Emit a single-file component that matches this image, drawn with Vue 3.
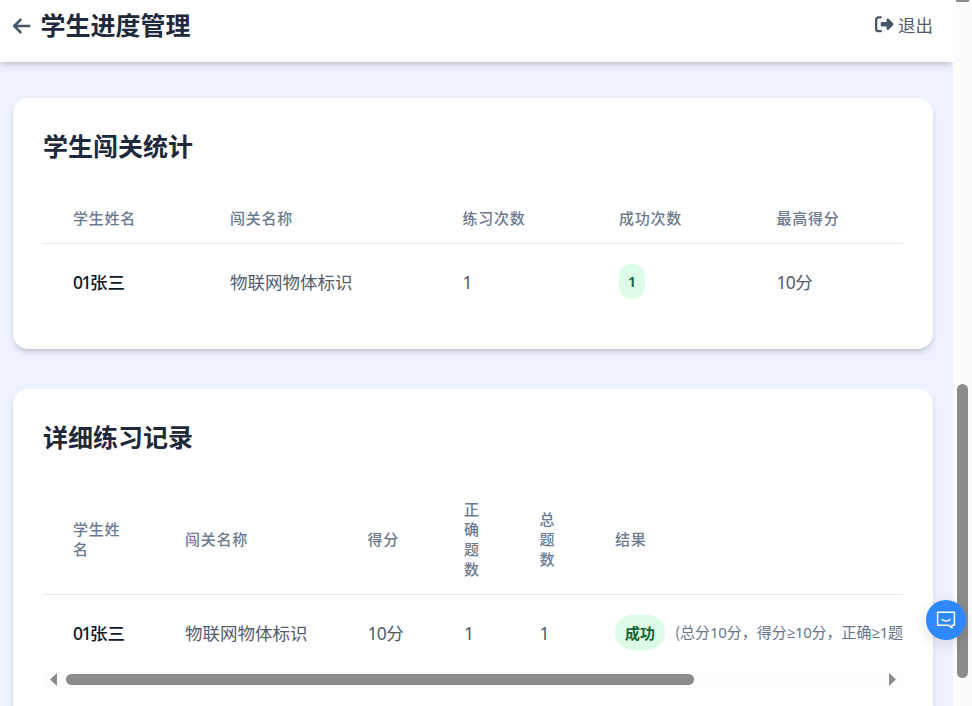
<template>
  <div class="screen">
    <div class="page">
      <header class="header">
        <div class="header-left">
          <svg class="icon-back" viewBox="0 0 448 512">
            <path d="M9.4 233.4c-12.5 12.5-12.5 32.8 0 45.3l160 160c12.5 12.5 32.8 12.5 45.3 0s12.5-32.8 0-45.3L109.2 288 416 288c17.7 0 32-14.3 32-32s-14.3-32-32-32l-306.7 0L214.6 118.6c12.5-12.5 12.5-32.8 0-45.3s-32.8-12.5-45.3 0l-160 160z" />
          </svg>
          <h1 class="title">学生进度管理</h1>
        </div>
        <div class="logout">
          <svg class="icon-logout" viewBox="0 0 512 512">
            <path d="M377.9 105.9L500.7 228.7c7.2 7.2 11.3 17.1 11.3 27.3s-4.1 20.1-11.3 27.3L377.9 406.1c-6.4 6.4-15 9.9-24 9.9c-18.7 0-33.9-15.2-33.9-33.9l0-62.1-128 0c-17.7 0-32-14.3-32-32l0-64c0-17.7 14.3-32 32-32l128 0 0-62.1c0-18.7 15.2-33.9 33.9-33.9c9 0 17.6 3.6 24 9.9zM160 96L96 96c-17.7 0-32 14.3-32 32l0 256c0 17.7 14.3 32 32 32l64 0c17.7 0 32 14.3 32 32s-14.3 32-32 32l-64 0c-53 0-96-43-96-96L0 128C0 75 43 32 96 32l64 0c17.7 0 32 14.3 32 32s-14.3 32-32 32z" />
          </svg>
          <span>退出</span>
        </div>
      </header>

      <main class="content">
        <section class="card">
          <h2 class="card-title">学生闯关统计</h2>
          <div class="row head stats">
            <div v-for="name in statsColumns" :key="name" class="cell">{{ name }}</div>
          </div>
          <div v-for="item in stats" :key="item.no" class="row body stats">
            <div class="cell name"><span class="num">{{ item.no }}</span>{{ item.name }}</div>
            <div class="cell">{{ item.level }}</div>
            <div class="cell"><span class="num">{{ item.times }}</span></div>
            <div class="cell"><span class="badge count">{{ item.success }}</span></div>
            <div class="cell"><span class="num">{{ item.best }}</span>分</div>
          </div>
        </section>

        <section class="card">
          <h2 class="card-title">详细练习记录</h2>
          <div class="table-wrap">
            <div class="row head records">
              <div v-for="name in recordColumns" :key="name" class="cell">{{ name }}</div>
            </div>
            <div v-for="item in records" :key="item.no" class="row body records">
              <div class="cell name"><span class="num">{{ item.no }}</span>{{ item.name }}</div>
              <div class="cell">{{ item.level }}</div>
              <div class="cell"><span class="num">{{ item.score }}</span>分</div>
              <div class="cell"><span class="num">{{ item.correct }}</span></div>
              <div class="cell"><span class="num">{{ item.total }}</span></div>
              <div class="cell result">
                <span class="badge">{{ item.result }}</span>
                <span class="note">(总分<span class="num">{{ item.full }}</span>分，得分<span class="num">≥{{ item.score }}</span>分，正确<span class="num">≥{{ item.correct }}</span>题</span>
              </div>
            </div>
          </div>
          <div class="hbar">
            <svg class="harrow" viewBox="0 0 7 13"><path d="M7 0v13L0 6.5z" /></svg>
            <div class="htrack"><div class="hthumb"></div></div>
            <svg class="harrow" viewBox="0 0 7 13"><path d="M0 0v13l7-6.5z" /></svg>
          </div>
        </section>
      </main>
    </div>

    <div class="vbar">
      <div class="varrow"></div>
      <div class="vthumb"></div>
    </div>

    <div class="chat">
      <svg class="icon-chat" viewBox="0 0 20 20">
        <path d="M1.6 2.2h16.8v13h-2.4v2.6l-3.6-2.6H1.6z" />
        <path d="M6 9.6q4 2.6 8 0" />
      </svg>
    </div>
  </div>
</template>

<script setup>
const statsColumns = ['学生姓名', '闯关名称', '练习次数', '成功次数', '最高得分'];
const recordColumns = ['学生姓名', '闯关名称', '得分', '正确题数', '总题数', '结果'];

const stats = [
  { no: '01', name: '张三', level: '物联网物体标识', times: 1, success: 1, best: 10 },
];

const records = [
  {
    no: '01',
    name: '张三',
    level: '物联网物体标识',
    score: 10,
    full: 10,
    correct: 1,
    total: 1,
    result: '成功',
  },
];
</script>

<style>
body {
  margin: 0;
  overflow: hidden;
}
</style>

<style scoped>
.screen {
  position: relative;
  display: flex;
  height: 706px;
  overflow: hidden;
  font-family: "Noto Sans CJK SC", sans-serif;
  font-size: 17.5px;
  line-height: 25px;
  color: #525c6c;
}

.page {
  width: 953px;
  background: #eef2ff;
}

/* header */
.header {
  display: flex;
  justify-content: space-between;
  box-sizing: border-box;
  height: 62px;
  padding: 7px 20px 0 13px;
  background: #fff;
  box-shadow: 0 5px 7px -1px rgba(0, 0, 0, 0.1), 0 2px 5px -2px rgba(0, 0, 0, 0.2);
}

.header-left {
  display: flex;
  align-items: center;
  gap: 10px;
  height: 35px;
}

.icon-back {
  width: 17.5px;
  height: 20px;
  margin-top: 2px;
  fill: #475569;
}

.title,
.card-title {
  margin: 0;
  font-size: 25px;
  line-height: 35px;
  font-weight: 700;
  color: #1e293b;
}

.logout {
  display: flex;
  align-items: center;
  gap: 4.5px;
  height: 34px;
  color: #4f5c70;
}

.icon-logout {
  width: 18.5px;
  height: 18.5px;
  fill: #475569;
}

/* cards */
.content {
  display: flex;
  flex-direction: column;
  gap: 40px;
  padding: 36px 20px 0 13px;
}

.card {
  padding: 30px;
  border-radius: 15px;
  background: #fff;
  box-shadow: 0 5px 7px -1px rgba(0, 0, 0, 0.1), 0 2px 5px -2px rgba(0, 0, 0, 0.2);
}

.card-title {
  margin-bottom: 30px;
}

/* tables */
.table-wrap {
  overflow: hidden;
}

.row {
  display: grid;
  align-items: center;
}

.stats {
  grid-template-columns: 157px 232.5px 156.5px 157.5px 156.5px;
}

.records {
  grid-template-columns: 112px 182.5px 96.5px 75.5px 75.5px 610px;
  width: 1152px;
}

.head {
  border-bottom: 1px solid #e2e8f0;
  font-size: 15px;
  line-height: 20px;
  font-weight: 500;
  letter-spacing: 0.75px;
  color: #6b7a90;
}

.head .cell {
  padding: 15px 30px;
}

.body .cell {
  padding: 0 30px;
  white-space: nowrap;
}

.body {
  height: 75px;
}

.name {
  font-weight: 500;
  color: #0f172a;
}

.num {
  font-family: "Noto Sans", "Open Sans", sans-serif;
  letter-spacing: -0.7px;
}

.name .num {
  letter-spacing: -1.5px;
}

.badge {
  display: inline-block;
  padding: 0 10px;
  border-radius: 18px;
  background: #dcfce7;
  color: #166534;
  font-size: 15px;
  line-height: 35px;
  font-weight: 700;
}

.count {
  padding: 0 8.8px;
  font-family: "Noto Sans", "Open Sans", sans-serif;
  font-weight: 600;
}

.result {
  display: flex;
  align-items: center;
  gap: 10px;
}

.note {
  margin-top: -2px;
  font-size: 15px;
  color: #64748b;
}

.note .num {
  letter-spacing: -0.3px;
}

/* scrollbars */
.hbar {
  display: flex;
  align-items: center;
  justify-content: space-between;
  height: 19px;
  padding: 0 7px;
  background: #fdfdfd;
}

.harrow {
  width: 7px;
  height: 13px;
  fill: #8b8b8b;
}

.htrack {
  width: 814px;
}

.hthumb {
  width: 628px;
  height: 11px;
  border-radius: 6px;
  background: #8b8b8b;
}

.vbar {
  display: flex;
  flex-direction: column;
  align-items: center;
  width: 19px;
  background: #fcfcfc;
}

.varrow {
  width: 13px;
  height: 2px;
  border-radius: 0 0 1px 1px;
  background: #8b8b8b;
}

.vthumb {
  width: 11px;
  height: 294px;
  margin-top: 382px;
  border-radius: 6px;
  background: #8b8b8b;
}

/* floating chat button */
.chat {
  position: absolute;
  top: 600px;
  left: 926px;
  display: flex;
  align-items: center;
  justify-content: center;
  width: 40px;
  height: 40px;
  border-radius: 50%;
  background: #2f88ff;
  box-shadow: 0 4px 14px rgba(0, 0, 0, 0.12);
}

.icon-chat {
  width: 20px;
  height: 20px;
  fill: none;
  stroke: #fff;
  stroke-width: 1.5;
  stroke-linejoin: round;
  stroke-linecap: round;
}
</style>
